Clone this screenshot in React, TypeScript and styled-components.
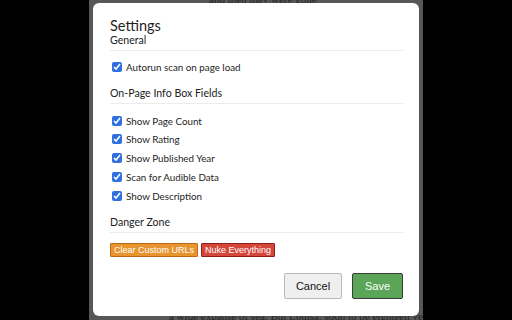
import React from "react";
import styled, { createGlobalStyle } from "styled-components";

const Global = createGlobalStyle`
  html, body { margin: 0; padding: 0; background: #000; }
  body { width: 512px; height: 320px; overflow: hidden; font-family: Lato, "Liberation Sans", sans-serif; }
`;

const Stage = styled.div`
  position: relative;
  width: 512px;
  height: 320px;
  background: #000;
  overflow: hidden;
`;

const Page = styled.div`
  margin-left: 89px;
  width: 334px;
  height: 320px;
  background: #575757;
  overflow: hidden;
  font-family: "Liberation Serif", serif;
  font-size: 11px;
  color: #262626;
  display: flex;
  flex-direction: column;
  justify-content: space-between;
`;

const PageLine = styled.div<{ $indent: number; $shift: number }>`
  white-space: nowrap;
  height: 8px;
  line-height: 8px;
  padding-left: ${(p) => p.$indent}px;
  margin-top: ${(p) => p.$shift}px;
`;

const Modal = styled.div`
  position: absolute;
  left: 93px;
  top: 3px;
  width: 326px;
  height: 313px;
  box-sizing: border-box;
  background: #fff;
  border-radius: 6px;
  padding: 14px 16px 0 17px;
  display: flex;
  flex-direction: column;
  color: #222;
`;

const Title = styled.div`
  font-size: 14.5px;
  line-height: 17px;
  font-weight: 400;
  color: #1f1f1f;
`;

const SectionHeading = styled.div<{ $top: number }>`
  margin-top: ${(p) => p.$top}px;
  font-size: 10.6px;
  line-height: 12px;
  padding-bottom: 4px;
  border-bottom: 1px solid #ececec;
  color: #222;
`;

const List = styled.div<{ $top: number }>`
  margin-top: ${(p) => p.$top}px;
  display: flex;
  flex-direction: column;
`;

const Row = styled.label`
  height: 18.75px;
  display: flex;
  align-items: center;
  gap: 4px;
  padding-left: 2px;
  font-size: 9.8px;
  color: #1e1e1e;
`;

const Check = styled.input`
  margin: 0;
  width: 10px;
  height: 10px;
  accent-color: #2f6fe0;
`;

const DangerRow = styled.div`
  margin-top: 9.5px;
  display: flex;
  gap: 3px;
`;

const DangerButton = styled.button<{ $bg: string; $border: string }>`
  height: 14px;
  padding: 0 3px;
  font-family: "Liberation Sans", Arial, sans-serif;
  font-size: 9px;
  line-height: 12px;
  color: #fff;
  background: ${(p) => p.$bg};
  border: 1px solid ${(p) => p.$border};
  border-radius: 1px;
  cursor: pointer;
`;

const Footer = styled.div`
  margin-top: 16px;
  display: flex;
  justify-content: flex-end;
  gap: 10px;
`;

const FooterButton = styled.button<{ $primary?: boolean }>`
  width: ${(p) => (p.$primary ? 51 : 58)}px;
  height: 26px;
  font-family: "Liberation Sans", Arial, sans-serif;
  font-size: 11px;
  color: ${(p) => (p.$primary ? "#fff" : "#111")};
  background: ${(p) => (p.$primary ? "#5aa557" : "#efefef")};
  border: 1px solid ${(p) => (p.$primary ? "#3b3b3b" : "#b9b9b9")};
  border-radius: 2px;
  cursor: pointer;
`;

const general = ["Autorun scan on page load"];
const fields = [
  "Show Page Count",
  "Show Rating",
  "Show Published Year",
  "Scan for Audible Data",
  "Show Description",
];

export default function App() {
  return (
    <Stage>
      <Global />
      <Page>
        <PageLine $indent={120} $shift={-5}>
          and then they were gone
        </PageLine>
        <PageLine $indent={80} $shift={0}>
          a wide expanse of sea. But Louisa, soon to be eighteen years
        </PageLine>
      </Page>
      <Modal>
        <Title>Settings</Title>
        <SectionHeading $top={0}>General</SectionHeading>
        <List $top={6.5}>
          {general.map((g) => (
            <Row key={g}>
              <Check type="checkbox" defaultChecked />
              {g}
            </Row>
          ))}
        </List>
        <SectionHeading $top={10.25}>On-Page Info Box Fields</SectionHeading>
        <List $top={7.8}>
          {fields.map((f) => (
            <Row key={f}>
              <Check type="checkbox" defaultChecked />
              {f}
            </Row>
          ))}
        </List>
        <SectionHeading $top={11}>Danger Zone</SectionHeading>
        <DangerRow>
          <DangerButton $bg="#e8952f" $border="#b86a1a">Clear Custom URLs</DangerButton>
          <DangerButton $bg="#d5473b" $border="#8e1f18">Nuke Everything</DangerButton>
        </DangerRow>
        <Footer>
          <FooterButton>Cancel</FooterButton>
          <FooterButton $primary>Save</FooterButton>
        </Footer>
      </Modal>
    </Stage>
  );
}
